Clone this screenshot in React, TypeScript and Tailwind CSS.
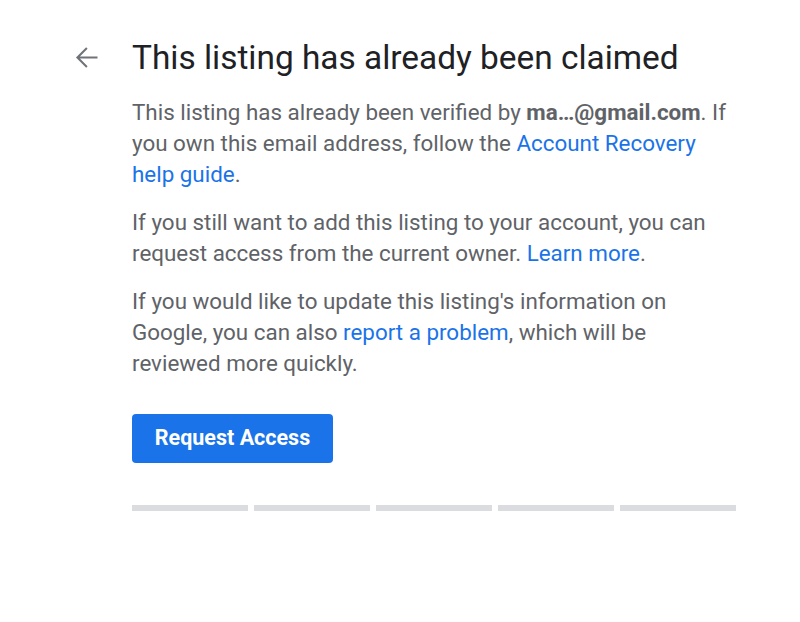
const SEGMENTS = [0, 1, 2, 3, 4];

function BackArrow() {
  return (
    <svg viewBox="0 0 24 24" className="h-[33px] w-[33px] fill-[#6f7378]" aria-hidden="true">
      <path d="M20 11.25H7.2l5.6-5.6L11.75 4.6 4.35 12l7.4 7.4 1.05-1.05-5.6-5.6H20v-1.5z" />
    </svg>
  );
}

export default function App() {
  return (
    <div className="min-h-[622px] w-[800px] bg-white font-['Roboto',sans-serif]">
      <div className="flex pt-[37px]">
        <div className="flex w-[132px] justify-end pr-[29px] pt-[4px]">
          <BackArrow />
        </div>
        <div className="w-[604px]">
          <h1 className="text-[33.4px] leading-[42px] text-[#202124]">
            This listing has already been claimed
          </h1>
          <div className="mt-[18px] flex flex-col gap-[17px] text-[22.4px] leading-[31px] text-[#5f6368]">
            <p>
              This listing has already been verified by{" "}
              <b className="font-bold">ma…@gmail.com</b>. If you own this email address,
              follow the <a className="text-[#1a73e8]">Account Recovery help guide</a>.
            </p>
            <p>
              If you still want to add this listing to your account, you can request access
              from the current owner. <a className="text-[#1a73e8]">Learn more</a>.
            </p>
            <p>
              If you would like to update this listing's information on Google, you can also{" "}
              <a className="text-[#1a73e8]">report a problem</a>, which will be reviewed more
              quickly.
            </p>
          </div>
          <button className="mt-[35px] h-[49px] w-[201px] rounded-[4px] bg-[#1a73e8] text-[21.5px] font-bold text-white">
            Request Access
          </button>
          <div className="mt-[42px] flex gap-[6px]">
            {SEGMENTS.map((i) => (
              <div key={i} className="h-[6px] flex-1 bg-[#dadce0]" />
            ))}
          </div>
        </div>
      </div>
    </div>
  );
}
